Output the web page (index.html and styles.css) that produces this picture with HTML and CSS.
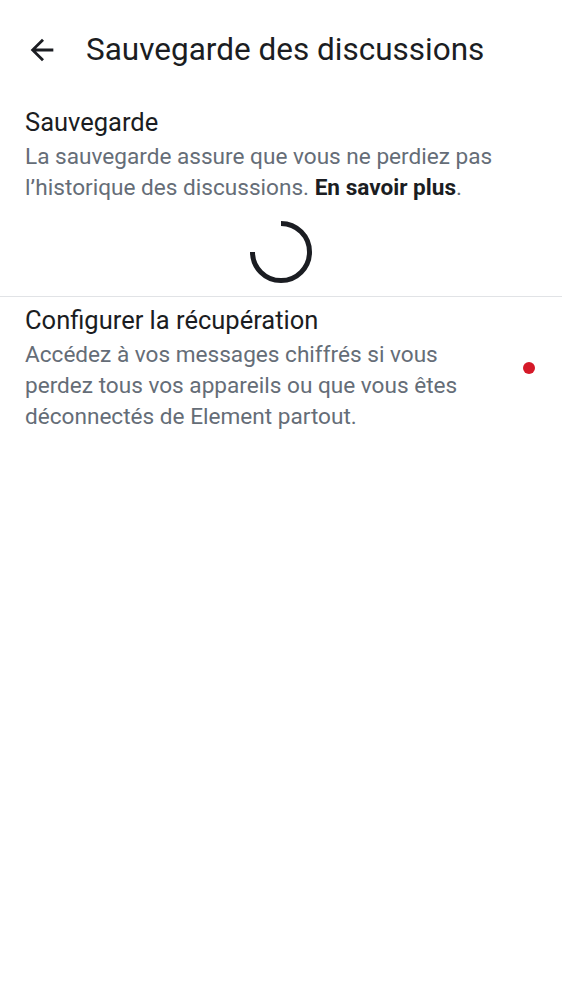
FILE: index.html
```html
<!DOCTYPE html>
<html lang="fr">
<head>
<meta charset="utf-8">
<link rel="stylesheet" href="styles.css">
</head>
<body>
<header class="topbar">
  <svg class="back" width="34" height="34" viewBox="0 0 24 24"><path d="M20 11H7.83l5.59-5.59L12 4l-8 8 8 8 1.41-1.41L7.83 13H20v-2z" fill="#1b1d22"/></svg>
  <h1 class="title">Sauvegarde des discussions</h1>
</header>
<section class="block">
  <h2 class="item-title">Sauvegarde</h2>
  <p class="item-text">La sauvegarde assure que vous ne perdiez pas l’historique des discussions. <b class="link">En savoir plus</b>.</p>
</section>
<div class="spinner-row">
  <svg class="spinner" width="64" height="64" viewBox="0 0 64 64"><path d="M32 3.5A28.5 28.5 0 1 1 3.5 32" fill="none" stroke="#1b1d22" stroke-width="5"/></svg>
</div>
<hr class="divider">
<section class="block row">
  <div class="row-main">
    <h2 class="item-title">Configurer la récupération</h2>
    <p class="item-text">Accédez à vos messages chiffrés si vous perdez tous vos appareils ou que vous êtes déconnectés de Element partout.</p>
  </div>
  <span class="dot"></span>
</section>
</body>
</html>
```
FILE: styles.css
```css
html, body {
  margin: 0;
  padding: 0;
  background: #ffffff;
  font-family: Roboto, "Noto Sans", sans-serif;
  color: #1b1d22;
}
.topbar {
  height: 36px;
  display: flex;
  align-items: center;
  padding: 32px 0 37px 25px;
  gap: 27px;
}
.back {
  display: block;
  flex: none;
}
.title {
  margin: 0;
  font-size: 31.5px;
  font-weight: 400;
  line-height: 36px;
  color: #1b1d22;
  white-space: nowrap;
}
.block {
  padding: 0 25px;
}
.item-title {
  margin: 0;
  font-size: 25.5px;
  font-weight: 400;
  line-height: 34px;
  color: #1b1d22;
}
.item-text {
  margin: 2px 0 0;
  font-size: 22.6px;
  line-height: 31px;
  color: #656d77;
}
.link {
  font-weight: 700;
  color: #1b1d22;
}
.spinner-row {
  display: flex;
  justify-content: center;
  padding: 17px 0 12px;
}
.spinner {
  display: block;
}
.divider {
  margin: 0;
  border: 0;
  height: 1px;
  background: #e1e3e6;
}
.row {
  display: flex;
  align-items: center;
  gap: 24px;
  padding-top: 6px;
  padding-right: 27px;
}
.row-main {
  flex: 1;
}
.dot {
  flex: none;
  width: 12px;
  height: 12px;
  border-radius: 50%;
  background: #d51928;
}
```
